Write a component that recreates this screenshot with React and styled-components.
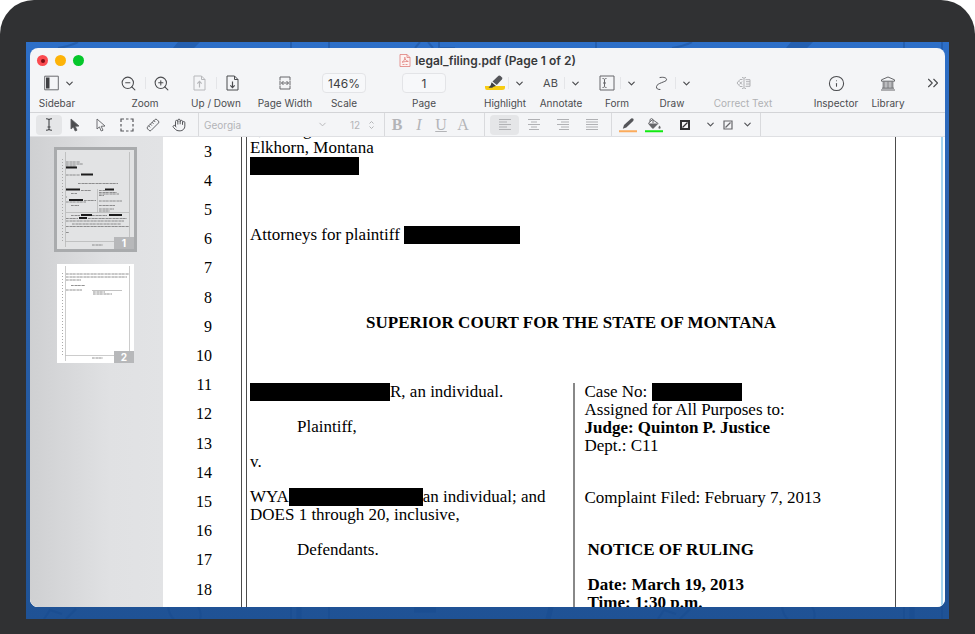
import React, { useState } from 'react';
import styled, { createGlobalStyle } from 'styled-components';
import { ChevronDown, ChevronsRight, Hand, Info, Ruler, ZoomIn, ZoomOut } from 'lucide-react';

const GlobalStyle = createGlobalStyle`
    * {
        box-sizing: border-box;
    }
    body {
        margin: 0;
        background: #fff;
        font-family: Inter, "Liberation Sans", sans-serif;
    }
    button, input, select {
        margin: 0;
        padding: 0;
        border: 0;
        background: none;
        color: inherit;
        font: inherit;
    }
    svg {
        display: block;
        flex: none;
    }
`;

/* device + desktop */
const Device = styled.div`
    display: flex;
    height: 100vh;
    padding: 42px 26px 15px;
    background: #303133;
    border-radius: 34px 34px 0 0;
`;
const Desktop = styled.div`
    position: relative;
    display: flex;
    flex: 1;
    min-width: 0;
    padding: 6px 4px 12px;
    background: linear-gradient(#2d6fc8, #2b62ae 30%, #1f5295);
`;
const Wallpaper = styled.svg`
    position: absolute;
    left: 0;
    top: 0;
    width: 100%;
    height: 100%;
`;
const Window = styled.main`
    position: relative;
    display: flex;
    flex-direction: column;
    flex: 1;
    min-width: 0;
    overflow: hidden;
    border-radius: 8px;
    background: #f4f5f7;
    color: #4b4c4f;
`;

/* title bar */
const TitleBar = styled.header`
    display: grid;
    grid-template-columns: 60px 1fr 60px;
    align-items: center;
    height: 25px;
    padding: 0 7px;
`;
const Lights = styled.div`
    display: flex;
    gap: 7px;
`;
const Light = styled.button`
    display: grid;
    place-items: center;
    width: 11px;
    height: 11px;
    border-radius: 50%;
    background: ${props => props.$color};
`;
const LightDot = styled.span`
    width: 4px;
    height: 4px;
    border-radius: 50%;
    background: #7d0d12;
`;
const Title = styled.h1`
    display: flex;
    justify-content: center;
    align-items: center;
    gap: 4px;
    margin: 0;
    font-size: 12px;
    font-weight: 600;
    line-height: 16px;
    color: #38393b;
    white-space: nowrap;
`;

/* main toolbar */
const Toolbar = styled.div`
    display: flex;
    height: 40px;
    padding: 0 2px 0 4px;
    border-bottom: 1px solid #d3d4d7;
`;
const Item = styled.div`
    display: flex;
    flex: none;
    flex-direction: column;
    align-items: center;
    gap: 3px;
    width: ${props => props.$w}px;
    margin-left: ${props => props.$before || '0'};
    color: ${props => props.$off ? '#b0b1b4' : '#4b4c4f'};
`;
const ItemTools = styled.div`
    display: flex;
    align-items: center;
    justify-content: center;
    align-self: stretch;
    height: 20px;
`;
const ItemLabel = styled.label`
    font-size: 10px;
    line-height: 14px;
    white-space: nowrap;
`;
const ToolButton = styled.button`
    display: flex;
    align-items: center;
    justify-content: center;
    flex: ${props => props.$w ? 'none' : '1'};
    width: ${props => props.$w ? props.$w + 'px' : 'auto'};
    height: 20px;
    font-size: 11px;
    color: ${props => props.$off ? '#b7b8bb' : 'inherit'};
`;
const Split = styled.span`
    width: 1px;
    height: 12px;
    background: #e4e5e8;
`;
const ToolInput = styled.input`
    width: 44px;
    height: 20px;
    border: 1px solid #e3e4e7;
    border-radius: 4px;
    background: #f7f8fa;
    font-size: 12px;
    text-align: center;
    color: #3e3f42;
`;

/* format bar */
const FormatBar = styled.div`
    display: flex;
    flex: none;
    height: 24px;
    border-bottom: 1px solid #dfe0e3;
`;
const Group = styled.div`
    display: flex;
    align-items: center;
    padding: ${props => props.$pad};
    border-right: 1px solid #d9dadd;
    color: ${props => props.$off ? '#b3b4b7' : '#55565a'};
`;
const Cell = styled.button`
    display: flex;
    align-items: center;
    justify-content: center;
    width: ${props => props.$w}px;
    height: 20px;
    border-radius: 4px;
    background: ${props => props.$on ? '#e5e6e8' : 'none'};
    font-family: "Liberation Serif", serif;
    font-size: 16px;
    font-style: ${props => props.$italic ? 'italic' : 'normal'};
    font-weight: ${props => props.$bold ? '700' : '400'};
    text-decoration: ${props => props.$underline ? 'underline' : 'none'};
`;
const Picker = styled.label`
    display: flex;
    align-items: center;
    width: ${props => props.$w}px;
    margin-right: ${props => props.$after || 0}px;
    font-size: ${props => props.$size}px;
`;
const PickerSelect = styled.select`
    flex: 1;
    min-width: 0;
    appearance: none;
`;

/* document area */
const Body = styled.div`
    display: flex;
    flex: 1;
    min-height: 0;
    overflow: hidden;
    background: #fff;
`;
const Sidebar = styled.aside`
    display: flex;
    flex: none;
    flex-direction: column;
    align-items: center;
    gap: 9px;
    width: 133px;
    padding: 10px 2px 0 0;
    background: linear-gradient(90deg, #cfd0d2, #e0e1e3 60%, #e2e3e5);
`;
const Thumb = styled.button`
    display: grid;
    border: 3px solid ${props => props.$on ? '#a9abad' : 'transparent'};
    background: ${props => props.$on ? '#e2e3e4' : '#fff'};
    background-clip: padding-box;
`;
const ThumbArt = styled.svg`
    grid-area: 1 / 1;
`;
const Badge = styled.span`
    grid-area: 1 / 1;
    align-self: end;
    justify-self: end;
    width: 20px;
    background: #b7b8ba;
    color: #fff;
    font-size: 10px;
    font-weight: 700;
    line-height: 12px;
`;
const Sheet = styled.article`
    display: flex;
    flex: 1;
    min-width: 0;
    margin-right: 2px;
    padding-right: 45px;
    border-right: 2px solid #a5d5ef;
    color: #000;
    font-family: "Liberation Serif", serif;
`;
const LineNumbers = styled.ol`
    flex: none;
    width: 78px;
    margin: 0;
    padding: 0 29px 0 0;
    list-style: none;
    font-size: 16px;
    line-height: 29px;
    text-align: right;
`;
const LineNumber = styled.li`
    height: 29px;

    &:nth-child(5n) {
        height: 30px;
    }
`;
const DoubleRule = styled.div`
    flex: none;
    width: 6px;
    border: solid #4c4c4c;
    border-width: 0 1px;
`;
const Pleading = styled.div`
    display: flex;
    flex: 1;
    flex-direction: column;
    min-width: 0;
    margin-top: -16px;
    padding-left: 3px;
    border-right: 1px solid #4c4c4c;
    font-size: 17px;
    line-height: 18px;
    white-space: nowrap;
`;
const Line = styled.p`
    margin: 0;
    padding: ${props => (props.$gap || 0) * 17}px 0 0 ${props => props.$indent || 0}px;
    font-weight: ${props => props.$bold ? '700' : '400'};
`;
const CourtName = styled.h2`
    margin: 70px 3px 51px 0;
    font-size: 17px;
    font-weight: 700;
    line-height: 18px;
    text-align: center;
`;
const Caption = styled.div`
    display: grid;
    grid-template-columns: 1fr 1fr;
    flex: 1;
`;
const CaptionSide = styled.section`
    padding-left: ${props => props.$ruled ? '10px' : '0'};
    border-left: ${props => props.$ruled ? '2px solid #888' : '0'};
`;
const Redacted = styled.span`
    display: inline-block;
    width: ${props => props.$w}px;
    height: 18px;
    background: #000;
    vertical-align: top;
`;

const Down = () => <ChevronDown size={11} strokeWidth={2.6} />;

const PdfIcon = () => (
    <svg width="12" height="13" viewBox="0 0 12 13" fill="none" stroke="#e07f7b" strokeWidth="0.8">
        <path d="M1 .5h7l3 3v9H1z" fill="#fdf3f2" />
        <path d="M8 .5v3h3M3 8.2c2-1 3-3 2.8-5 .2 2.500 1.300 3.800 3.500 4.200-2 0-4 .2-6.300.8M3.500 10.500h2M6.500 10.500h2" />
    </svg>
);

const SidebarIcon = () => (
    <svg width="15" height="16" viewBox="0 0 15 16">
        <path d="M.7 1.200h13.600v13.600H.7z" fill="none" stroke="#6a6b6e" />
        <path d="M2 2.500h3.500v11H2z" fill="#3f4043" />
    </svg>
);

const PageArrowIcon = ({ up }) => (
    <svg width="13" height="16" viewBox="0 0 13 16" fill="none" stroke="currentColor">
        <path d="M1 1h7.500L12 4.500V15H1zM8.500 1v3.500H12" />
        <path d={up ? 'M6.500 12.500V6.500M4.300 8.600 6.500 6.400l2.200 2.200' : 'M6.500 6.500v6M4.300 10.400l2.200 2.200 2.200-2.200'} strokeWidth="1.2" />
    </svg>
);

const PageWidthIcon = () => (
    <svg width="12" height="14" viewBox="0 0 12 14" fill="none" stroke="#66676a">
        <path d="M1 4.500V1h10v3.500M1 9.500V13h10V9.500M1 5v4M11 5v4M2.500 7h7M4.500 5 2.500 7l2 2M7.500 5l2 2-2 2" />
    </svg>
);

const HighlightIcon = () => (
    <svg width="22" height="16" viewBox="0 0 22 16">
        <path d="M1 11h20v1.500Q21 15 18 15H3Q1 15 1 12.500z" fill="#f7cc12" />
        <path d="M8.500 6.500 14.500.8q1-.8 2 .1l1.500 1.500q.8.900 0 1.800L12.800 10z" fill="#55565a" />
        <path d="M7.600 7.300 12 10.900 9.500 11.800 8.200 12.800H4.500l2.200-2.500z" fill="#3d3e40" />
    </svg>
);

const FormIcon = () => (
    <svg width="16" height="16" viewBox="0 0 16 16" fill="none" stroke="#66676a">
        <path d="M1 1h14v14H1z" />
        <path d="M3.500 3.500q1.500 0 2 .8.500-.8 2-.8M3.500 12.500q1.500 0 2-.8.500.8 2 .8M5.500 4.300v7.400M4 8h3" />
    </svg>
);

const DrawIcon = () => (
    <svg width="13" height="15" viewBox="0 0 13 15" fill="none" stroke="#55565a" strokeLinecap="round">
        <path d="M5 1.500c4-.8 7 .5 6.500 2.500C11 6 2 7 1.500 10.500 1.200 13 3 13.500 5 13.500" />
    </svg>
);

const CorrectTextIcon = () => (
    <svg width="15" height="14" viewBox="0 0 15 14" fill="none" stroke="currentColor">
        <path d="M6.500 3.500H4L1 7l3 3.500h2.500M3.500 5.500l2.500 3M6 5.500l-2.500 3M6 1.500q2 0 2 1 0-1 2-1M6 12.500q2 0 2-1 0 1 2 1M8 2.500v9M9.500 3.700H14v6.600H9.500M10 5.700h4M10 8h4" />
    </svg>
);

const LibraryIcon = () => (
    <svg width="16" height="15" viewBox="0 0 16 15" fill="none" stroke="#66676a">
        <path d="M1.500 3.800 8 1l6.500 2.800v1.400h-13zM2 12.200h12M1 14h14M3.200 5.500v6.500M4.900 5.500v6.500M7.100 5.500v6.500M8.900 5.500v6.500M11.100 5.500v6.500M12.800 5.500v6.500" />
    </svg>
);

const TextCursorIcon = () => (
    <svg width="8" height="13" viewBox="0 0 8 13" fill="none" stroke="#434447">
        <path d="M1 .7q2.500 0 3 1 .500-1 3-1M1 12.300q2.500 0 3-1 .500 1 3 1M4 1.700v9.600M2.500 9h3" strokeWidth="1.100" />
    </svg>
);

const PointerIcon = ({ filled }) => (
    <svg width="10" height="14" viewBox="0 0 10 14" strokeLinejoin="round">
        <path d="M1 1v10l2.400-2.100L5.200 13l1.800-.8-1.800-3.900L9 8z" fill={filled ? '#4b4c4f' : 'none'} stroke="#606164" strokeWidth="0.9" />
    </svg>
);

const MarqueeIcon = () => (
    <svg width="14" height="14" viewBox="0 0 14 14" fill="none" stroke="#55565a" strokeWidth="1.200">
        <path d="M1 4V1h3M6 1h2.500M10.500 1H13v3M13 6v2.500M13 10.500V13h-2.500M8.500 13H6M4 13H1v-2.500M1 8.500V6" />
    </svg>
);

// slimmer and steeper than the stock ruler
const RulerIcon = () => <Ruler size={14} strokeWidth={1.6} transform="rotate(-90)" />;

const AlignIcon = ({ rows }) => (
    <svg width="12" height="12" viewBox="0 0 12 12" stroke="#b0b1b4">
        {rows.map(([x1, x2], i) => <line key={i} x1={x1} x2={x2} y1={i * 2.5 + 0.5} y2={i * 2.5 + 0.5} />)}
    </svg>
);

const PencilIcon = () => (
    <svg width="18" height="16" viewBox="0 0 18 16">
        <path d="M3.800 11.800 5 8l7.200-6.600q1.200-.6 2.100.4.800 1.100-.1 2.100l-6.900 6.700z" fill="#55565a" />
        <path d="M0 13.200h18v2H0z" fill="#fbab5c" />
    </svg>
);

const FillIcon = () => (
    <svg width="18" height="16" viewBox="0 0 18 16" fill="#66676a">
        <path d="M3 6.500h10.500L8.500 11.500Q7.800 12 7 11.300z" />
        <path d="M5 5V2.500Q6.500.7 8 2.500V6M3.200 6.500 7.500 2.600l5.800 4" fill="none" stroke="#66676a" />
        <path d="M14.500 8.500q2.300 3 0 3.300-2.200-.3 0-3.300" />
        <path d="M0 13.200h18v2H0z" fill="#12ea12" />
    </svg>
);

const StrokeBoxIcon = ({ heavy }) => (
    <svg width="10" height="10" viewBox="0 0 10 10" fill="none" stroke={heavy ? '#303133' : '#66676a'} strokeWidth={heavy ? 2 : 1.2}>
        <path d="M1 1h8v8H1z" />
        <path d="M2.500 7.500l5-5" strokeWidth="1.200" />
    </svg>
);

const StepperIcon = () => (
    <svg width="7" height="10" viewBox="0 0 7 10" fill="none" stroke="currentColor">
        <path d="M1.500 3.500l2-2 2 2M1.500 6.500l2 2 2-2" />
    </svg>
);

// x, y, length of each line of writing on the small pages
const pageOneText = [
    [9, 12, 14], [9, 14, 17], [9, 16, 10], [9, 25, 14], [21, 33.5, 40], [24, 40.5, 10], [42, 40.5, 6],
    [14, 43.5, 6], [42, 42.5, 18], [42, 44, 20], [42, 45.5, 5], [9, 47, 1], [27, 50.5, 12],
    [9, 52, 20], [42, 51, 23], [14, 55.5, 8], [42, 55.5, 16], [42, 59, 15], [42, 61, 11],
    [14, 65.5, 9], [35, 65.5, 15], [9, 68.5, 12], [31, 68.5, 39], [9, 71, 58], [15, 74, 49],
    [9, 76.5, 63], [9, 82.5, 3], [35, 95, 11],
];
const pageOneMarks = [
    [9, 17.5, 11], [24, 24.5, 12], [9, 39.5, 14], [48, 39.5, 9], [12, 50, 14], [24, 65, 11],
    [52, 65, 13], [22, 68, 8],
];
const pageTwoText = [
    [9, 10, 63], [9, 13, 61], [9, 16, 15], [14, 21.5, 14], [9, 26, 16], [36, 28, 12], [36, 30, 19], [35, 94, 11],
];

const Thumbnail = ({ number, selected, text, marks = [], onClick }) => (
    <Thumb type="button" $on={selected} onClick={onClick}>
        <ThumbArt width="77" height="99" viewBox="0 0 77 99" fill="none" aria-hidden="true">
            <path d="M5.500 9v82" stroke="#aaa" strokeDasharray="1 2" />
            <path d="M8.500 2v95M72.500 2v95M8.500 91.500h64" stroke="#aaa" strokeWidth="0.600" />
            {number === 1 && <path d="M40.500 39v23.500M9 62.500h63" stroke="#aaa" strokeWidth="0.600" />}
            {number === 2 && <path d="M35 26.500h30" stroke="#999" strokeWidth="0.600" />}
            {text.map(([x, y, w], i) => (
                <path key={i} d={`M${x} ${y}h${w}`} stroke="#777" strokeWidth="0.8" strokeDasharray="2 .3 1 .4 3 .3" />
            ))}
            {marks.map(([x, y, w], i) => <path key={i} d={`M${x} ${y}h${w}`} stroke="#1c1c1c" strokeWidth="1.8" />)}
        </ThumbArt>
        <Badge>{number}</Badge>
    </Thumb>
);

const lineNumbers = [3, 4, 5, 6, 7, 8, 9, 10, 11, 12, 13, 14, 15, 16, 17, 18];

const alignments = [
    { name: 'Align left', rows: [[0, 12], [0, 8], [0, 12], [0, 8], [0, 12]] },
    { name: 'Align center', rows: [[0, 12], [3, 9], [0, 12], [3, 9], [1, 11]] },
    { name: 'Align right', rows: [[0, 12], [4, 12], [0, 12], [4, 12], [2, 12]] },
    { name: 'Justify', rows: [[0, 12], [0, 12], [0, 12], [0, 12], [0, 12]] },
];

const App = () => {
    const [scale, setScale] = useState('146%');
    const [page, setPage] = useState('1');
    const [tool, setTool] = useState('Select text');
    const [align, setAlign] = useState('Align left');

    const tools = [
        { name: 'Select text', icon: <TextCursorIcon /> },
        { name: 'Edit object', icon: <PointerIcon filled /> },
        { name: 'Select object', icon: <PointerIcon /> },
        { name: 'Select area', icon: <MarqueeIcon /> },
        { name: 'Measure', icon: <RulerIcon /> },
        { name: 'Pan', icon: <Hand size={14} strokeWidth={1.7} /> },
    ];

    return (
        <>
            <GlobalStyle />
            <Device>
                <Desktop>
                    <Wallpaper aria-hidden="true" fill="none" stroke="#17488c" strokeOpacity="0.4" strokeWidth="2">
                        <path d="M32 6Q44 4 52 0M646 6Q658 4 666 0M265 0v6M570 0v6M878 0v6M916 0v577" />
                        <path d="M147 6l5-6h22l-6 6zM760 6l5-6h22l-6 6z" fill="#17488c" fillOpacity="0.4" stroke="none" />
                        <path d="M389 6l5-6M407 6l-5-6M413 0v6h16M303 0v6" />
                        <path d="M18 577l6-9 12 4M40 577l10-10M142 565q2 10 6 12M172 565q4 5 2 12M265 565v12M303 565v12" />
                        <path d="M632 577l6-9 12 4M654 577l10-10M756 565q2 10 6 12M786 565q4 5 2 12M878 565v12" />
                        <path d="M388 568h22M273 565v12M522 577l3-12M886 565v12" strokeWidth="5" />
                    </Wallpaper>
                    <Window>
                        <TitleBar>
                            <Lights>
                                <Light type="button" aria-label="Close" $color="#fb4b50"><LightDot /></Light>
                                <Light type="button" aria-label="Minimize" $color="#fdb308" />
                                <Light type="button" aria-label="Zoom window" $color="#05c72b" />
                            </Lights>
                            <Title><PdfIcon />legal_filing.pdf (Page 1 of 2)</Title>
                        </TitleBar>

                        <Toolbar>
                            <Item $w={46}>
                                <ItemTools>
                                    <ToolButton type="button" aria-label="Sidebar" $w={24}><SidebarIcon /></ToolButton>
                                    <ToolButton type="button" aria-label="Sidebar options" $w={12}><Down /></ToolButton>
                                </ItemTools>
                                <ItemLabel as="span">Sidebar</ItemLabel>
                            </Item>
                            <Item $w={64} $before="33px">
                                <ItemTools>
                                    <ToolButton type="button" aria-label="Zoom out"><ZoomOut size={17} strokeWidth={1.5} /></ToolButton>
                                    <Split />
                                    <ToolButton type="button" aria-label="Zoom in"><ZoomIn size={17} strokeWidth={1.5} /></ToolButton>
                                </ItemTools>
                                <ItemLabel as="span">Zoom</ItemLabel>
                            </Item>
                            <Item $w={64} $before="7px">
                                <ItemTools>
                                    <ToolButton type="button" aria-label="Page up" $off><PageArrowIcon up /></ToolButton>
                                    <Split />
                                    <ToolButton type="button" aria-label="Page down"><PageArrowIcon /></ToolButton>
                                </ItemTools>
                                <ItemLabel as="span">Up / Down</ItemLabel>
                            </Item>
                            <Item $w={56} $before="9px">
                                <ItemTools>
                                    <ToolButton type="button" aria-label="Page width"><PageWidthIcon /></ToolButton>
                                </ItemTools>
                                <ItemLabel as="span">Page Width</ItemLabel>
                            </Item>
                            <Item $w={44} $before="9px">
                                <ToolInput id="scale" value={scale} onChange={e => setScale(e.target.value)} />
                                <ItemLabel htmlFor="scale">Scale</ItemLabel>
                            </Item>
                            <Item $w={44} $before="36px">
                                <ToolInput id="page" value={page} onChange={e => setPage(e.target.value)} />
                                <ItemLabel htmlFor="page">Page</ItemLabel>
                            </Item>
                            <Item $w={48} $before="35px">
                                <ItemTools>
                                    <ToolButton type="button" aria-label="Highlight"><HighlightIcon /></ToolButton>
                                    <Split />
                                    <ToolButton type="button" aria-label="Highlight options" $w={20}><Down /></ToolButton>
                                </ItemTools>
                                <ItemLabel as="span">Highlight</ItemLabel>
                            </Item>
                            <Item $w={48} $before="8px">
                                <ItemTools>
                                    <ToolButton type="button">AB</ToolButton>
                                    <Split />
                                    <ToolButton type="button" aria-label="Annotate options" $w={20}><Down /></ToolButton>
                                </ItemTools>
                                <ItemLabel as="span">Annotate</ItemLabel>
                            </Item>
                            <Item $w={48} $before="8px">
                                <ItemTools>
                                    <ToolButton type="button" aria-label="Form"><FormIcon /></ToolButton>
                                    <Split />
                                    <ToolButton type="button" aria-label="Form options" $w={20}><Down /></ToolButton>
                                </ItemTools>
                                <ItemLabel as="span">Form</ItemLabel>
                            </Item>
                            <Item $w={48} $before="7px">
                                <ItemTools>
                                    <ToolButton type="button" aria-label="Draw"><DrawIcon /></ToolButton>
                                    <Split />
                                    <ToolButton type="button" aria-label="Draw options" $w={20}><Down /></ToolButton>
                                </ItemTools>
                                <ItemLabel as="span">Draw</ItemLabel>
                            </Item>
                            <Item $w={60} $before="17px" $off>
                                <ItemTools>
                                    <ToolButton type="button" aria-label="Correct text"><CorrectTextIcon /></ToolButton>
                                </ItemTools>
                                <ItemLabel as="span">Correct Text</ItemLabel>
                            </Item>
                            <Item $w={48} $before="auto">
                                <ItemTools>
                                    <ToolButton type="button" aria-label="Inspector"><Info size={17} strokeWidth={1.5} /></ToolButton>
                                </ItemTools>
                                <ItemLabel as="span">Inspector</ItemLabel>
                            </Item>
                            <Item $w={48} $before="4px">
                                <ItemTools>
                                    <ToolButton type="button" aria-label="Library"><LibraryIcon /></ToolButton>
                                </ItemTools>
                                <ItemLabel as="span">Library</ItemLabel>
                            </Item>
                            <Item $w={20} $before="11px">
                                <ItemTools>
                                    <ToolButton type="button" aria-label="More tools"><ChevronsRight size={18} strokeWidth={1.5} /></ToolButton>
                                </ItemTools>
                            </Item>
                        </Toolbar>

                        <FormatBar>
                            <Group $pad="0 6px">
                                {tools.map(({ name, icon }) => (
                                    <Cell key={name} type="button" aria-label={name} $w={26} $on={tool === name} onClick={() => setTool(name)}>
                                        {icon}
                                    </Cell>
                                ))}
                            </Group>
                            <Group $pad="0 9px 0 5px" $off>
                                <Picker $w={124} $after={22} $size={10}>
                                    <PickerSelect aria-label="Font"><option>Georgia</option></PickerSelect>
                                    <ChevronDown size={11} strokeWidth={2} />
                                </Picker>
                                <Picker $w={25} $size={10}>
                                    <PickerSelect aria-label="Font size"><option>12</option></PickerSelect>
                                    <StepperIcon />
                                </Picker>
                            </Group>
                            <Group $pad="0 10px 0 1px" $off>
                                <Cell type="button" $w={22} $bold>B</Cell>
                                <Cell type="button" $w={22} $italic>I</Cell>
                                <Cell type="button" $w={22} $underline>U</Cell>
                                <Cell type="button" $w={22}>A</Cell>
                            </Group>
                            <Group $pad="0 5px">
                                {alignments.map(({ name, rows }) => (
                                    <Cell key={name} type="button" aria-label={name} $w={29} $on={align === name} onClick={() => setAlign(name)}>
                                        <AlignIcon rows={rows} />
                                    </Cell>
                                ))}
                            </Group>
                            <Group $pad="0 5px 0 3px">
                                <Cell type="button" aria-label="Stroke color" $w={26}><PencilIcon /></Cell>
                                <Cell type="button" aria-label="Fill color" $w={26}><FillIcon /></Cell>
                                <Cell type="button" aria-label="Line width" $w={36}><StrokeBoxIcon heavy /></Cell>
                                <Cell type="button" aria-label="Line width options" $w={14}><Down /></Cell>
                                <Cell type="button" aria-label="Line style" $w={22}><StrokeBoxIcon /></Cell>
                                <Cell type="button" aria-label="Line style options" $w={16}><Down /></Cell>
                            </Group>
                        </FormatBar>

                        <Body>
                            <Sidebar>
                                <Thumbnail number={1} selected={page === '1'} text={pageOneText} marks={pageOneMarks} onClick={() => setPage('1')} />
                                <Thumbnail number={2} selected={page === '2'} text={pageTwoText} onClick={() => setPage('2')} />
                            </Sidebar>
                            <Sheet>
                                <LineNumbers>
                                    {lineNumbers.map(n => <LineNumber key={n}>{n}</LineNumber>)}
                                </LineNumbers>
                                <DoubleRule />
                                <Pleading>
                                    <Line>1, Ewing</Line>
                                    <Line>Elkhorn, Montana</Line>
                                    <Line><Redacted $w={109} /></Line>
                                    <Line $gap={3}>Attorneys for plaintiff <Redacted $w={116} /></Line>
                                    <CourtName>SUPERIOR COURT FOR THE STATE OF MONTANA</CourtName>
                                    <Caption>
                                        <CaptionSide>
                                            <Line><Redacted $w={140} />R, an individual.</Line>
                                            <Line $gap={1} $indent={47}>Plaintiff,</Line>
                                            <Line $gap={1}>v.</Line>
                                            <Line $gap={1}>WYA<Redacted $w={134} />an individual; and</Line>
                                            <Line>DOES 1 through 20, inclusive,</Line>
                                            <Line $gap={1} $indent={47}>Defendants.</Line>
                                        </CaptionSide>
                                        <CaptionSide $ruled>
                                            <Line>Case No: <Redacted $w={90} /></Line>
                                            <Line>Assigned for All Purposes to:</Line>
                                            <Line $bold>Judge: Quinton P. Justice</Line>
                                            <Line>Dept.: C11</Line>
                                            <Line $gap={2}>Complaint Filed: February 7, 2013</Line>
                                            <Line $gap={2} $indent={3} $bold>NOTICE OF RULING</Line>
                                            <Line $gap={1} $indent={3} $bold>Date: March 19, 2013</Line>
                                            <Line $indent={3} $bold>Time: 1:30 p.m.</Line>
                                        </CaptionSide>
                                    </Caption>
                                </Pleading>
                            </Sheet>
                        </Body>
                    </Window>
                </Desktop>
            </Device>
        </>
    );
};

export default App;
